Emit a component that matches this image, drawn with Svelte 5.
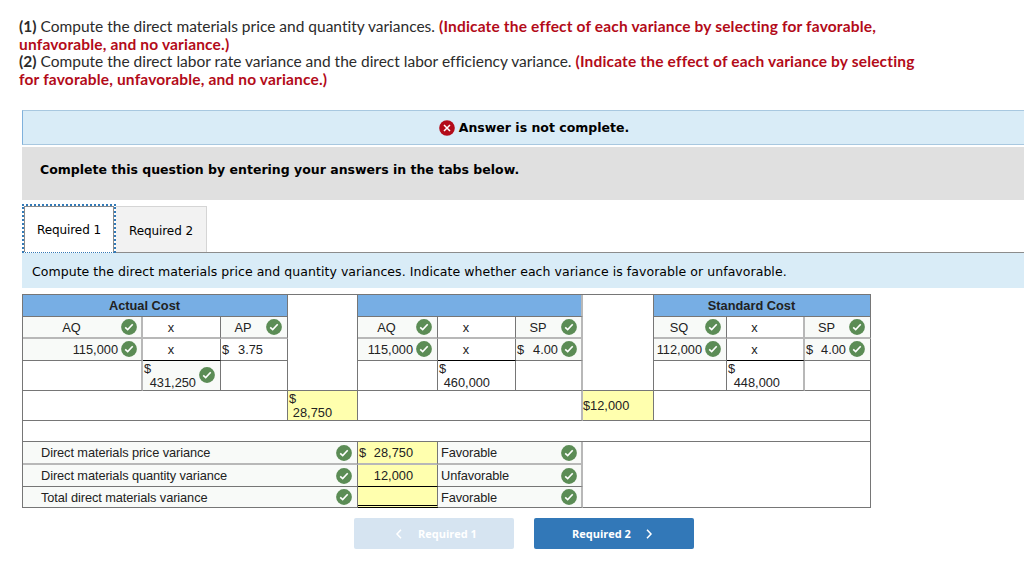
<script>
  // c: cell classes, s: column span, r: row span, d: leading dollar sign, k: check mark
  const cells = [
    { t: 'Actual Cost', c: 'head', s: 3 },
    { c: '', r: 4 },
    { c: 'head softr', s: 3 },
    { c: '', r: 4 },
    { t: 'Standard Cost', c: 'head', s: 3 },

    { t: 'AQ', c: 'answer name softr softb', k: 1 },
    { t: 'x', c: 'times softb' },
    { t: 'AP', c: 'answer name softb', k: 1 },
    { t: 'AQ', c: 'answer name softb', k: 1 },
    { t: 'x', c: 'times softb' },
    { t: 'SP', c: 'answer name softr softb', k: 1 },
    { t: 'SQ', c: 'answer name softb', k: 1 },
    { t: 'x', c: 'times softr softb' },
    { t: 'SP', c: 'answer name softb', k: 1 },

    { t: '115,000', c: 'answer num softr', k: 1 },
    { t: 'x', c: 'times ink' },
    { d: 1, t: '3.75', c: 'num plain' },
    { t: '115,000', c: 'answer num', k: 1 },
    { t: 'x', c: 'times ink' },
    { d: 1, t: '4.00', c: 'answer num softr', k: 1 },
    { t: '112,000', c: 'answer num', k: 1 },
    { t: 'x', c: 'times ink softr' },
    { d: 1, t: '4.00', c: 'answer num', k: 1 },

    { c: 'softr' },
    { d: 1, t: '431,250', c: 'answer total', k: 1 },
    { c: '' },
    { c: '' },
    { d: 1, t: '460,000', c: 'total bare' },
    { c: 'softr' },
    { c: '' },
    { d: 1, t: '448,000', c: 'total bare softr' },
    { c: '' },

    { c: '', s: 3 },
    { d: 1, t: '28,750', c: 'total bare yellow' },
    { c: 'softr', s: 3 },
    { t: '$12,000', c: 'yellow left' },
    { c: '', s: 3 },

    { c: '', s: 11 },

    { t: 'Direct materials price variance', c: 'answer label softb', s: 4, k: 1 },
    { d: 1, t: '28,750', c: 'num yellow wide softb' },
    { t: 'Favorable', c: 'answer effect softr softb', s: 2, k: 1 },
    { c: '', s: 4, r: 3 },
    { t: 'Direct materials quantity variance', c: 'answer label', s: 4, k: 1 },
    { t: '12,000', c: 'num yellow wide ink' },
    { t: 'Unfavorable', c: 'answer effect softr', s: 2, k: 1 },
    { t: 'Total direct materials variance', c: 'answer label', s: 4, k: 1 },
    { c: 'yellow double' },
    { t: 'Favorable', c: 'answer effect softr', s: 2, k: 1 }
  ];
</script>

{#snippet check()}
  <svg class="check" width="16" height="16" viewBox="0 0 16 16" aria-hidden="true">
    <circle cx="8" cy="8" r="7.9" fill="#5b8c55" />
    <path d="M4.2 8.3 6.7 10.6 11.7 5.2" fill="none" stroke="#fff" stroke-width="1.6" />
  </svg>
{/snippet}

<main>
  <div class="intro">
    <p><b>(1)</b> Compute the direct materials price and quantity variances. <strong>(Indicate the effect of each variance by selecting for favorable,</strong></p>
    <p><strong>unfavorable, and no variance.)</strong></p>
    <p><b>(2)</b> Compute the direct labor rate variance and the direct labor efficiency variance. <strong>(Indicate the effect of each variance by selecting</strong></p>
    <p><strong>for favorable, unfavorable, and no variance.)</strong></p>
  </div>

  <div class="status">
    <svg width="16" height="16" viewBox="0 0 16 16" aria-hidden="true">
      <circle cx="8" cy="8" r="7.8" fill="#b30b19" />
      <path d="M5 5 11 11M11 5 5 11" stroke="#fff" stroke-width="1.5" />
    </svg>
    <span>Answer is not complete.</span>
  </div>
  <div class="notice"><span>Complete this question by entering your answers in the tabs below.</span></div>

  <div class="tabs">
    <div class="tab active"><div>Required 1</div></div>
    <div class="tab"><div>Required 2</div></div>
  </div>
  <div class="prompt"><span>Compute the direct materials price and quantity variances. Indicate whether each variance is favorable or unfavorable.</span></div>

  <div class="sheet">
    {#each cells as cell}
      <div class="cell {cell.c} span{cell.s ?? 1} rows{cell.r ?? 1}">
        {#if cell.d}<span class="dollar">$</span>{/if}
        {#if cell.t}<span class="value">{cell.t}</span>{/if}
        {#if cell.k}{@render check()}{/if}
      </div>
    {/each}
  </div>

  <div class="buttons">
    <button class="prev" disabled>
      <svg width="8" height="10" viewBox="0 0 8 10"><path d="M6 .8 2 5 6 9.2" /></svg>
      <span>Required 1</span>
    </button>
    <button class="next">
      <span>Required 2</span>
      <svg width="8" height="10" viewBox="0 0 8 10"><path d="M2 .8 6 5 2 9.2" /></svg>
    </button>
  </div>
</main>

<style>
  :global(body) { margin: 0; background: #fff; overflow: hidden; }
  main {
    box-sizing: border-box;
    width: 1024px;
    height: 561px;
    overflow: hidden;
    padding-left: 22px;
    font-family: "DejaVu Sans", Verdana, sans-serif;
    font-size: 12.5px;
    color: #000;
  }
  .intro {
    box-sizing: border-box;
    height: 110px;
    padding-top: 18px;
    margin-left: -3px;
    font: 15.5px/17.5px Lato, sans-serif;
    font-variant-ligatures: none;
    color: #2b2b2b;
  }
  .intro p { margin: 0; white-space: nowrap; }
  .intro strong { color: #b30b19; letter-spacing: 0.17px; }
  .status {
    display: flex;
    align-items: center;
    justify-content: center;
    box-sizing: border-box;
    width: 1024px;
    height: 35px;
    gap: 4px;
    border: 1px solid #a8c8e0;
    border-left-color: #7fb1dc;
    background: #d9ecf7;
    font-weight: bold;
    font-size: 12.5px;
  }
  .notice {
    box-sizing: border-box;
    height: 53px;
    margin-top: 2px;
    padding: 15px 0 0 18px;
    background: #e0e0e0;
    font-weight: bold;
    line-height: 16px;
    white-space: nowrap;
  }
  .tabs {
    display: flex;
    align-items: flex-end;
    box-sizing: border-box;
    height: 53px;
    border-bottom: 1px solid #8c8c8c;
    font-size: 12px;
    letter-spacing: -0.1px;
  }
  .tab {
    display: flex;
    align-items: center;
    justify-content: center;
    box-sizing: border-box;
    width: 91px;
    height: 46px;
    padding-top: 2px;
    border: 2px solid #d5d5d5;
    border-width: 1px 1px 0 0;
    background: #f2f2f2;
  }
  .tab.active {
    align-items: stretch;
    width: 94px;
    height: 49px;
    margin-bottom: -1px;
    padding: 0;
    border: 2px dotted #337ab7;
    border-bottom-width: 1px;
    background: #fff;
  }
  .tab.active div {
    flex: 1;
    border: 1px solid #8c8c8c;
    border-bottom: 0;
    text-align: center;
    line-height: 47px;
  }
  .prompt {
    height: 35px;
    padding-left: 10px;
    background: #d9ecf7;
    line-height: 37px;
    letter-spacing: 0.05px;
    white-space: nowrap;
  }
  .sheet {
    display: grid;
    grid-template-columns: 120px 78px 67px 70px 80px 78px 67px 71px 73px 78px 66px;
    grid-template-rows: 22px 22px 22px 30px 30px 21px 23px 22px 21px;
    width: 848px;
    margin-top: 6px;
    border: solid #767676;
    border-width: 1px 0 0 1px;
    font: 12.8px/15px "Liberation Sans", Arial, sans-serif;
    color: #222;
  }
  .cell {
    display: flex;
    align-items: center;
    box-sizing: border-box;
    min-width: 0;
    border: solid #767676;
    border-width: 0 1px 1px 0;
    white-space: nowrap;
  }
  .span2 { grid-column: span 2; }
  .span3 { grid-column: span 3; }
  .span4 { grid-column: span 4; }
  .span11 { grid-column: span 11; }
  .rows3 { grid-row: span 3; }
  .rows4 { grid-row: span 4; }
  .head { justify-content: center; padding-right: 21px; background: #77aee4; font-weight: bold; }
  .answer { background: #f8faf8; }
  .yellow { background: #ffffae; }
  .softr { border-right: 2px solid #b8b8b8; }
  .softb { border-bottom: 2px solid #b8b8b8; }
  .ink { border-bottom: 1px solid #000; }
  .check { flex: none; margin: 0 5px 0 4px; }
  .softr > .check { margin-right: 4px; }
  .num { padding-bottom: 1px; }
  .name .value { flex: 1; padding-left: 3px; text-align: center; }
  .times { justify-content: center; padding-right: 21px; }
  .num .value { margin-left: auto; }
  .num .check { margin-left: 3px; }
  .num .dollar { margin-left: 1px; }
  .plain { padding-right: 24px; }
  .wide { padding-right: 24px; }
  .total { display: grid; grid-template-columns: 1fr auto; grid-template-rows: 14px 15px; }
  .total .dollar { grid-area: 1 / 1; margin-left: 1px; }
  .total .value { grid-area: 2 / 1; text-align: right; }
  .total .check { grid-area: 1 / 2 / 3 / 2; margin: -1px 5px 0 3px; }
  .total.bare { padding-right: 25px; }
  .total.softr { padding-right: 23px; }
  .left { padding-left: 0; }
  .label .value { flex: 1; padding-left: 18px; letter-spacing: -0.09px; }
  .effect .value { flex: 1; padding-left: 3px; letter-spacing: -0.09px; }
  .double { border-bottom: 3px double #000; }
  .buttons { display: flex; gap: 20px; margin: 10px 0 0 332px; }
  button {
    display: flex;
    align-items: center;
    box-sizing: border-box;
    width: 160px;
    height: 31px;
    padding: 0;
    border: 0;
    border-radius: 2px;
    color: #fff;
    font: bold 11px/16px "Open Sans", sans-serif;
  }
  button path { fill: none; stroke: currentColor; stroke-width: 1.5; }
  .prev { padding-left: 41px; gap: 15px; background: #d6e4f1; }
  .next { padding-left: 38px; gap: 14px; background: #3278b8; }
</style>
